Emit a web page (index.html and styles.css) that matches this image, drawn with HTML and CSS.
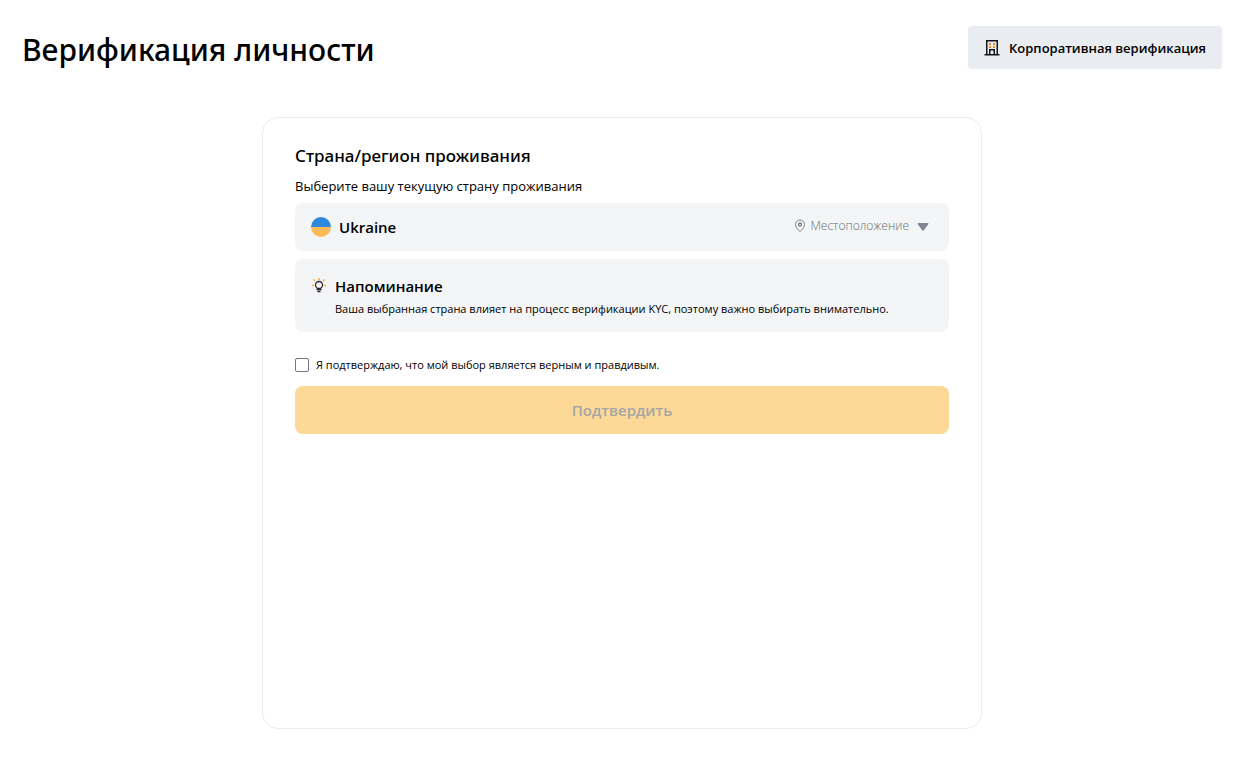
FILE: index.html
```html
<!DOCTYPE html>
<html lang="ru">
<head>
    <meta charset="utf-8">
    <meta name="viewport" content="width=device-width, initial-scale=1">
    <title>Верификация личности</title>
    <link rel="stylesheet" href="styles.css">
</head>
<body>

<header class="header">
    <h1>Верификация личности</h1>
    <button type="button" class="corporate">
        <svg width="16" height="16" viewBox="0 0 16 16" fill="none">
            <path d="M2 0h12v14h1.500v1.500H.500V14H2zM3.500 1.500V14H5V9h6v5h1.500V1.500zM6.500 10.500V14h3v-3.500z" fill="#12161c" fill-rule="evenodd"/>
            <path d="M5 3h2v2H5zM9 3h2v2H9zM5 6h2v2H5zM9 6h2v2H9z" fill="#ea8a20"/>
        </svg>
        Корпоративная верификация
    </button>
</header>

<main class="card">
    <h2>Страна/регион проживания</h2>
    <label class="hint" for="country">Выберите вашу текущую страну проживания</label>

    <!-- Country -->
    <div class="country">
        <svg class="flag" width="20" height="20" viewBox="0 0 20 20">
            <path d="M0 10a10 10 0 0 1 20 0z" fill="#2d88de"/>
            <path d="M0 10a10 10 0 0 0 20 0z" fill="#fdbb58"/>
        </svg>
        <select id="country">
            <option>Ukraine</option>
        </select>
        <span class="location">
            <svg width="12" height="14" viewBox="0 0 12 14" fill="none" stroke="#7d7d7d">
                <path d="M6 12.500C3.500 10.300 1.500 8.200 1.500 5.500a4.500 4.500 0 0 1 9 0C10.500 8.200 8.500 10.300 6 12.500z"/>
                <circle cx="6" cy="5.500" r="1.500" stroke-width="1.300"/>
            </svg>
            Местоположение
        </span>
        <svg class="arrow" width="12" height="8" viewBox="0 0 12 8">
            <path d="M1.500 0h9q1.500 0 .7 1.300L6.900 7.300q-.9.900-1.800 0L.8 1.300Q0 0 1.500 0z" fill="#818791"/>
        </svg>
    </div>

    <!-- Reminder -->
    <section class="reminder">
        <svg width="16" height="16" viewBox="0 0 16 16" fill="none">
            <circle cx="8" cy="7" r="3.500" stroke="#2f2433" stroke-width="1.300"/>
            <path d="M5.500 11.500h5M6.500 13.500h3" stroke="#2f2433" stroke-width="1.300"/>
            <path d="M8 0v2M2.500 1.500L4 3M13.500 1.500L12 3M1 7.500h2M13 7.500h2" stroke="#f6ad45" stroke-width="1.500"/>
        </svg>
        <div>
            <h3>Напоминание</h3>
            <p>Ваша выбранная страна влияет на процесс верификации KYC, поэтому важно выбирать внимательно.</p>
        </div>
    </section>

    <label class="agree">
        <input type="checkbox">
        Я подтверждаю, что мой выбор является верным и правдивым.
    </label>
    <button type="submit" class="submit" disabled>Подтвердить</button>
</main>

</body>
</html>
```
FILE: styles.css
```css
* {
    box-sizing: border-box;
}

body {
    margin: 0;
    padding: 26px 27px 28px 22px;
    background: #fff;
    color: #000;
    font-family: "Open Sans", "Noto Sans", sans-serif;
    font-size: 11px;
}

h1, h2, h3, p {
    margin: 0;
    font-weight: 600;
}

button, select {
    border: 0;
    font-family: inherit;
    color: inherit;
}

.header {
    display: flex;
    justify-content: space-between;
    align-items: flex-start;
    margin-bottom: 43px;
}

h1, h2 {
    font-family: "Noto Sans", "Open Sans", sans-serif;
    font-weight: 500;
}

h1 {
    font-size: 30px;
    line-height: 48px;
}

.corporate {
    display: flex;
    align-items: center;
    gap: 9px;
    height: 43px;
    padding: 0 16px;
    border-radius: 4px;
    background: #e9ecf0;
    font-size: 13px;
    font-weight: 600;
}

.card {
    max-width: 720px;
    min-height: 612px;
    margin: 0 auto;
    padding: 24px 32px;
    border: 1px solid #eaecef;
    border-radius: 16px;
}

h2 {
    font-size: 17px;
    line-height: 28px;
}

.hint {
    display: block;
    padding: 5px 0 6px;
    font-size: 13px;
    line-height: 22px;
}

.country {
    display: flex;
    align-items: center;
    height: 48px;
    margin-bottom: 8px;
    padding: 0 20px 0 16px;
    border-radius: 8px;
    background: #f3f5f7;
}

.country select {
    flex: 1;
    height: 48px;
    padding: 0 8px;
    appearance: none;
    background: none;
    font-size: 15px;
    font-weight: 600;
}

.location {
    display: flex;
    align-items: center;
    gap: 4px;
    margin-right: 8px;
    padding-bottom: 2px;
    color: #66706f;
    line-height: 16px;
    font-size: 12px;
    font-weight: 300;
}

.reminder {
    display: flex;
    gap: 8px;
    padding: 15px 16px 12px;
    border-radius: 8px;
    background: #f3f5f7;
}

.reminder svg {
    flex: none;
    margin-top: 4px;
}

h3 {
    font-size: 15px;
    line-height: 24px;
}

.reminder p {
    font-weight: 400;
    line-height: 22px;
}

.agree {
    display: flex;
    align-items: center;
    gap: 7px;
    margin: 24px 0 12px;
    line-height: 18px;
}

.agree input {
    appearance: none;
    width: 14px;
    height: 14px;
    margin: 0;
    border: 1px solid #767680;
    border-radius: 2px;
    background: #fff;
}

.agree input:checked {
    background: #fcd997;
}

.submit {
    width: 100%;
    height: 48px;
    border-radius: 8px;
    background: #fcd997;
    color: #a5a5a5;
    font-size: 15px;
    font-weight: 600;
}
```
